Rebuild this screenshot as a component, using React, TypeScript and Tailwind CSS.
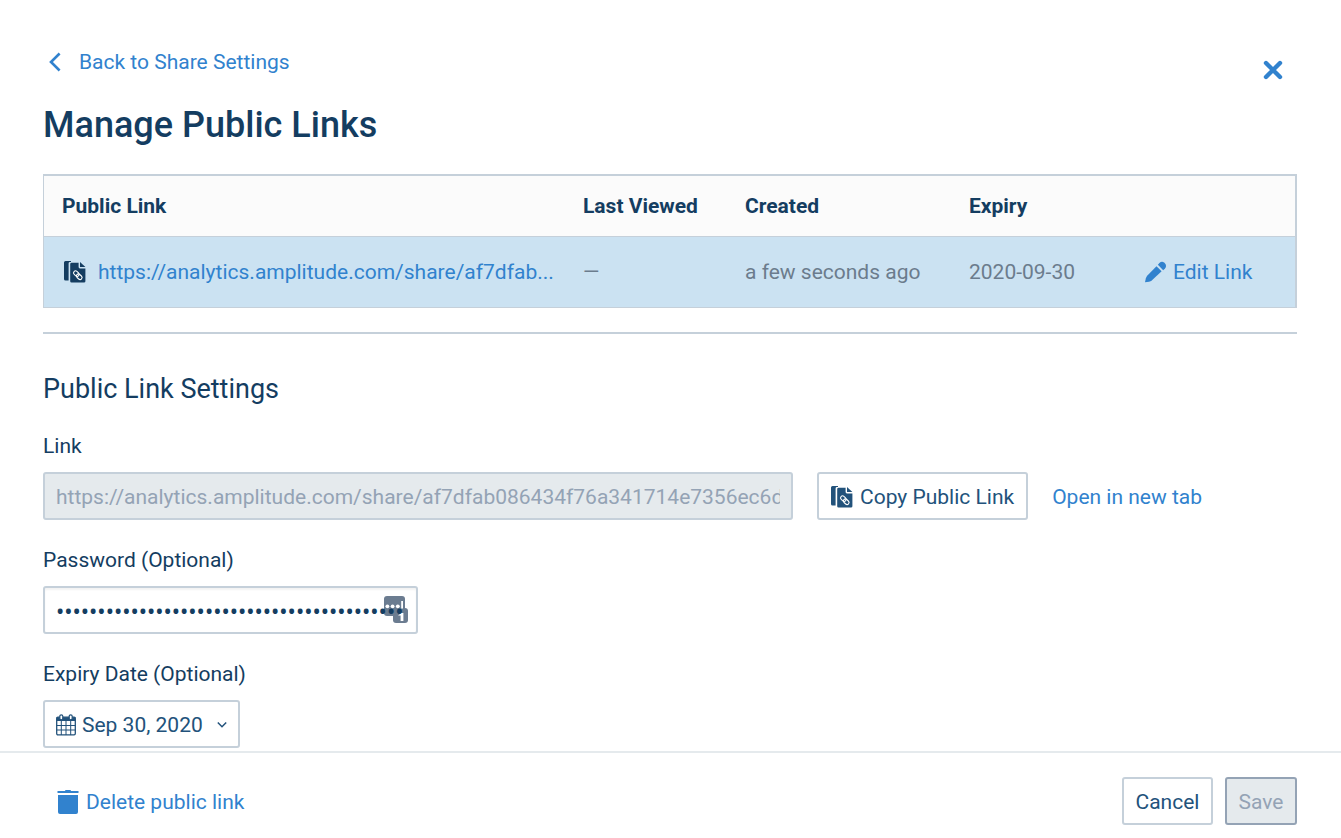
import React from "react";

const CopyLinkIcon = () => (
  <svg viewBox="0 0 22 22" className="h-[22px] w-[22px] shrink-0" fill="currentColor" aria-hidden="true">
    <path d="M1.5 0H7V1H6Q4.6 1 4.6 2.4V19.5H1.5Q0 19.5 0 18V1.5Q0 0 1.5 0Z" />
    <path d="M7.6 1.8H14.6V6Q14.6 7.4 16 7.4H21.4V20.2Q21.4 21.6 20 21.6H7.6Q6.2 21.6 6.2 20.2V3.2Q6.2 1.8 7.6 1.8Z" />
    <path d="M16 1L21.4 6H16Z" />
    <g fill="none" stroke="white" strokeWidth="1.1" transform="rotate(42 13.8 14.2)">
      <rect x="8.6" y="12" width="6.2" height="4" rx="2" />
      <rect x="12.8" y="12.4" width="6.2" height="4" rx="2" />
    </g>
  </svg>
);

const PencilIcon = () => (
  <svg viewBox="0 0 22 22" className="h-[22px] w-[22px] shrink-0" fill="currentColor" aria-hidden="true">
    <path d="M11.5 5.2L16.6 10.3L7 19.2Q5.6 20.4 4 20.7L0 21.2L0.8 17.6Q1.2 15.9 2.4 14.6Z" />
    <path d="M12.9 3.8L14.4 2.1Q16.8 -0.4 19.4 1.8Q22.4 4.6 20 7.4L18.2 9.2Z" />
  </svg>
);

const TrashIcon = () => (
  <svg viewBox="0 0 22 24" className="h-6 w-[22px] shrink-0" fill="currentColor" aria-hidden="true">
    <path d="M8 1Q8 0 9 0H13Q14 0 14 1H21.5V3H0.5V1Z" />
    <path d="M1 5H21V22Q21 24 19 24H3Q1 24 1 22Z" />
  </svg>
);

const CalendarIcon = () => (
  <svg viewBox="0 0 20 22" className="h-[22px] w-5 shrink-0" aria-hidden="true">
    <rect x="0.7" y="3.2" width="18.6" height="17.6" rx="1.2" fill="none" stroke="currentColor" strokeWidth="1.3" />
    <path d="M0.5 3.2H19.5V7H0.5Z" fill="currentColor" />
    <path d="M5.3 7V21M10 7V21M14.7 7V21M0.5 11.5H19.5M0.5 16H19.5" stroke="currentColor" strokeWidth="1" />
    <g fill="white" stroke="currentColor" strokeWidth="1.2">
      <rect x="3.8" y="0.8" width="3" height="5" rx="1.5" />
      <rect x="13.2" y="0.8" width="3" height="5" rx="1.5" />
    </g>
  </svg>
);

const PasswordManagerIcon = () => (
  <svg viewBox="0 0 24 28" className="absolute right-[10px] top-[9px] h-7 w-6 text-[#6b7c90]" aria-hidden="true">
    <rect x="0" y="1" width="21" height="20" rx="3" fill="currentColor" />
    <rect x="9" y="13" width="15" height="15" rx="3" fill="currentColor" />
    <g fill="white">
      <circle cx="3.4" cy="11.3" r="1.9" />
      <circle cx="8.6" cy="11.3" r="1.9" />
      <circle cx="13.8" cy="11.3" r="1.9" />
      <path d="M17.2 6H19V13.4H17.2Z" />
      <path d="M16.6 18H19.4V26H16.6V20.5H14Q15.8 19.6 16.6 18Z" />
    </g>
  </svg>
);

const Field = ({ id, label, children }: { id: string; label: string; children: React.ReactNode }) => (
  <div className="mt-6">
    <label htmlFor={id} className="mb-[10px] block leading-8">
      {label}
    </label>
    {children}
  </div>
);

const App = () => {
  const shareUrl = "https://analytics.amplitude.com/share/af7dfab086434f76a341714e7356ec6d";

  return (
    <div className="flex min-h-screen flex-col bg-white font-['Roboto',sans-serif] text-[21px] leading-8 text-[#143d61]">
      <main className="flex-1 pl-[43px] pr-11 pt-[46px]">
        <header className="flex items-start justify-between">
          <div>
            <a href="#share" className="flex items-center gap-[18px] pl-[6px] text-[#3182ce]">
              <svg viewBox="0 0 12 20" className="h-5 w-3" fill="none" stroke="currentColor" strokeWidth="2.6" aria-hidden="true">
                <path d="M10.6 1.5L2 10L10.6 18.5" />
              </svg>
              Back to Share Settings
            </a>
            <h1 className="mt-[23px] text-[36px] font-medium leading-[48px]">Manage Public Links</h1>
          </div>
          <button type="button" aria-label="Close" className="mr-[14px] mt-[14px] text-[#3182ce]">
            <svg viewBox="0 0 20 20" className="h-5 w-5" stroke="currentColor" strokeWidth="4.4" strokeLinecap="round" aria-hidden="true">
              <path d="M3 3L17 17M17 3L3 17" />
            </svg>
          </button>
        </header>

        <div className="mt-[25px] border-b border-l border-r-2 border-t-2 border-[#c5d0da]">
          <table className="w-full table-fixed text-left">
            <thead>
              <tr className="h-[60px] border-b border-[#c5d0da] bg-[#fbfbfb] font-bold">
                <th className="px-[18px] pt-px">Public Link</th>
                <th className="w-[162px] px-[18px] pt-px">Last Viewed</th>
                <th className="w-[224px] px-[18px] pt-px">Created</th>
                <th className="w-[176px] px-[18px] pt-px">Expiry</th>
                <th className="w-[168px] px-[18px] pt-px" aria-label="Actions" />
              </tr>
            </thead>
            <tbody>
              <tr className="h-[71px] bg-[#cbe2f2] text-[#6b7c8d]">
                <td className="pl-5 pr-2 pt-px">
                  <div className="flex items-center gap-3">
                    <span className="text-[#143d61]">
                      <CopyLinkIcon />
                    </span>
                    <a href="#link" className="text-[#3182ce]">
                      https://analytics.amplitude.com/share/af7dfab...
                    </a>
                  </div>
                </td>
                <td className="px-[18px] pt-px">—</td>
                <td className="px-[18px] pt-px">a few seconds ago</td>
                <td className="px-[18px] pt-px">2020-09-30</td>
                <td className="pl-[18px] pt-px">
                  <button type="button" className="flex items-center gap-[6px] text-[#3182ce]">
                    <PencilIcon />
                    Edit Link
                  </button>
                </td>
              </tr>
            </tbody>
          </table>
        </div>

        <hr className="mt-6 border-t-2 border-[#c5d0da]" />

        <h2 className="mt-9 pt-px text-[27px] leading-9">Public Link Settings</h2>

        <div className="-mt-px">
          <Field id="link" label="Link">
            <div className="flex items-center gap-6">
              <input
                id="link"
                type="text"
                disabled
                value={shareUrl}
                className="h-12 w-[750px] rounded-[3px] border-2 border-[#c5d0da] bg-[#e5eaed] px-[11px] pt-px text-[#94a3b5]"
              />
              <button type="button" className="flex h-12 items-center gap-[7px] rounded-[3px] border-2 border-[#c5d0da] px-3 pt-px text-[#22527b]">
                <CopyLinkIcon />
                Copy Public Link
              </button>
              <a href="#open" className="pt-px text-[#3182ce]">
                Open in new tab
              </a>
            </div>
          </Field>

          <Field id="password" label="Password (Optional)">
            <div className="relative w-[375px]">
              <PasswordManagerIcon />
              <input
                id="password"
                type="password"
                defaultValue="correct-horse-battery-staple-amplitude-042"
                className="relative block h-12 w-full rounded-[3px] border-2 border-[#c5d0da] bg-transparent px-[11px] font-['Noto_Sans',sans-serif] text-[22px] shadow-[inset_0_2px_2px_rgba(0,0,0,0.05)]"
              />
            </div>
          </Field>

          <Field id="expiry" label="Expiry Date (Optional)">
            <button
              id="expiry"
              type="button"
              aria-haspopup="dialog"
              className="flex h-12 w-[197px] items-center gap-[6px] rounded-[3px] border-2 border-[#c5d0da] px-[11px] pt-px text-[#22527b]"
            >
              <CalendarIcon />
              Sep 30, 2020
              <svg viewBox="0 0 10 8" className="ml-auto h-2 w-[10px]" fill="none" stroke="currentColor" strokeWidth="1.5" aria-hidden="true">
                <path d="M0.8 1.5L5 5.8L9.2 1.5" />
              </svg>
            </button>
          </Field>
        </div>
      </main>

      <footer className="flex items-center justify-between border-t-2 border-[#e5eaed] pb-[13px] pl-[57px] pr-11 pt-6">
        <button type="button" className="flex items-center gap-[7px] pt-px text-[#3182ce]">
          <TrashIcon />
          Delete public link
        </button>
        <div className="flex gap-3">
          <button type="button" className="h-12 w-[91px] rounded-[3px] border-2 border-[#c5d0da] pt-px text-[#22527b]">
            Cancel
          </button>
          <button type="button" disabled className="h-12 w-[72px] rounded-[3px] border-2 border-[#94a3b5] bg-[#e5eaed] pt-px text-[#94a3b5]">
            Save
          </button>
        </div>
      </footer>
    </div>
  );
};

export default App;
